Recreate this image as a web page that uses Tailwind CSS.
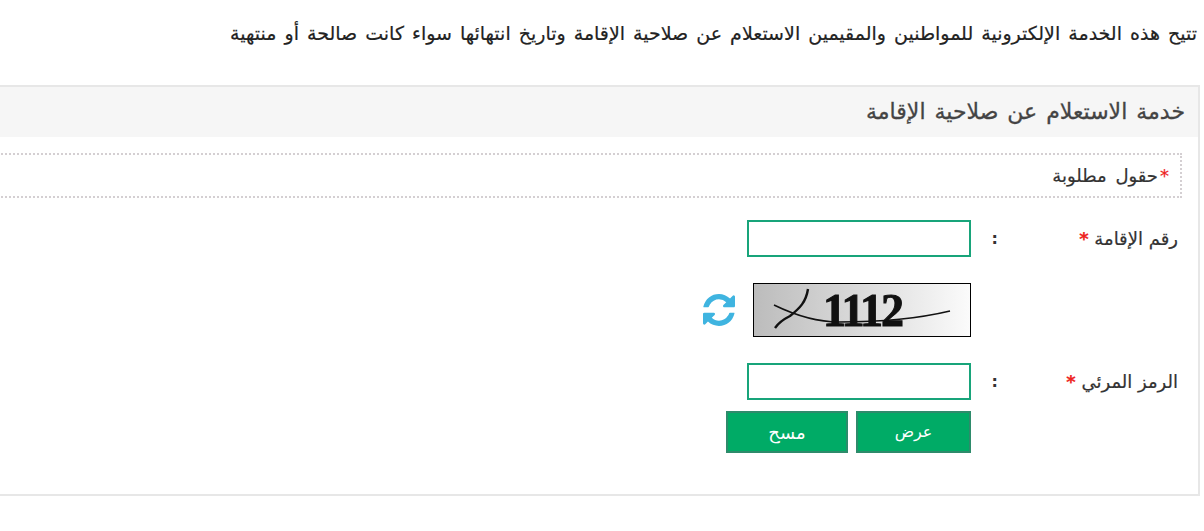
<!DOCTYPE html>
<html dir="rtl" lang="ar">
<head>
    <meta charset="utf-8">
    <title>خدمة الاستعلام عن صلاحية الإقامة</title>
    <script src="https://cdn.jsdelivr.net/npm/@tailwindcss/browser@4"></script>
</head>
<body class="bg-white overflow-hidden h-[531px] font-['DejaVu_Sans',sans-serif] text-[#333]">
    <p class="pt-[20px] pr-[7px] h-[85px] text-[19px] leading-[26px] [word-spacing:2px] [-webkit-text-stroke:0.2px] whitespace-nowrap text-[#222]">تتيح هذه الخدمة الإلكترونية للمواطنين والمقيمين الاستعلام عن صلاحية الإقامة وتاريخ انتهائها سواء كانت صالحة أو منتهية</p>

    <div class="mr-[4px] ml-[-20px] h-[411px] border-2 border-[#e7e7e7] bg-white">
        <div class="h-[50px] bg-[#f6f6f6] pr-[13px] text-[22px] leading-[50px] [word-spacing:2px] [-webkit-text-stroke:0.3px] text-[#444]">خدمة الاستعلام عن صلاحية الإقامة</div>

        <div class="mt-[16px] mr-[16px] h-[45px] border-2 border-dotted border-[#d4cfd2] pr-[11px] flex items-center text-[18px] [word-spacing:3px] [-webkit-text-stroke:0.2px]">
            <span class="text-[#e22] ml-[2px]">*</span>حقول مطلوبة
        </div>

        <div class="mt-[22px] flex h-[37px] items-center">
            <div class="w-[180px] mr-[20px] whitespace-nowrap text-[18px] [-webkit-text-stroke:0.2px]">رقم الإقامة <span class="text-[#e22] font-bold">*</span></div>
            <div class="w-[27px] text-right font-bold">:</div>
            <input class="w-[224px] h-[37px] border-2 border-[#18a47a] bg-white" type="text">
        </div>

        <div class="mt-[26px] flex h-[54px] items-center mr-[227px]">
            <div class="relative w-[218px] h-[54px] border border-black bg-gradient-to-l from-[#fbfbfb] to-[#bcbcbc] overflow-hidden">
                <span dir="ltr" class="absolute left-[69px] top-[-1px] font-['Liberation_Serif',serif] font-bold text-[46px] leading-[56px] tracking-[-2px] text-[#111] [-webkit-text-stroke:1px_#111] blur-[0.7px]">1112</span>
                <svg class="absolute inset-0" width="216" height="52" viewBox="0 0 216 52" fill="none" stroke="#111">
                    <path d="M20 21 Q55 38 85 38 Q150 38 196 27" stroke-width="1.6"/>
                    <path d="M54 5 C52 18 46 24 36 32 C30 35 25 38 21 44" stroke-width="2.4"/>
                </svg>
            </div>
            <svg class="mr-[18px] text-[#3fb4e0]" width="32" height="32" viewBox="0 0 1536 1536" fill="currentColor"><path d="M1511 928q0 5-1 7-64 268-268 434.5t-478 166.5q-146 0-282.5-55t-243.5-157l-129 129q-19 19-45 19t-45-19-19-45v-448q0-26 19-45t45-19h448q26 0 45 19t19 45-19 45l-137 137q71 66 161 102t187 36q134 0 250-65t186-179q11-17 53-117 8-23 30-23h192q13 0 22.5 9.5t9.5 22.5zm25-800v448q0 26-19 45t-45 19h-448q-26 0-45-19t-19-45 19-45l138-138q-148-137-349-137-134 0-250 65t-186 179q-11 17-53 117-8 23-30 23h-199q-13 0-22.5-9.5t-9.5-22.5v-7q65-268 270-434.5t480-166.5q146 0 284 55.5t245 156.5l130-129q19-19 45-19t45 19 19 45z"/></svg>
        </div>

        <div class="mt-[26px] flex h-[37px] items-center">
            <div class="w-[180px] mr-[20px] whitespace-nowrap text-[18px] [-webkit-text-stroke:0.2px]">الرمز المرئي <span class="text-[#e22] font-bold">*</span></div>
            <div class="w-[27px] text-right font-bold">:</div>
            <input class="w-[224px] h-[37px] border-2 border-[#18a47a] bg-white" type="text">
        </div>

        <div class="mt-[11px] mr-[227px] flex gap-[8px]">
            <button class="w-[115px] h-[42px] bg-[#00ab66] border-2 border-[#2e8b6b] text-white text-[16px]">عرض</button>
            <button class="w-[122px] h-[42px] bg-[#00ab66] border-2 border-[#2e8b6b] text-white text-[18px]">مسح</button>
        </div>
    </div>
</body>
</html>
